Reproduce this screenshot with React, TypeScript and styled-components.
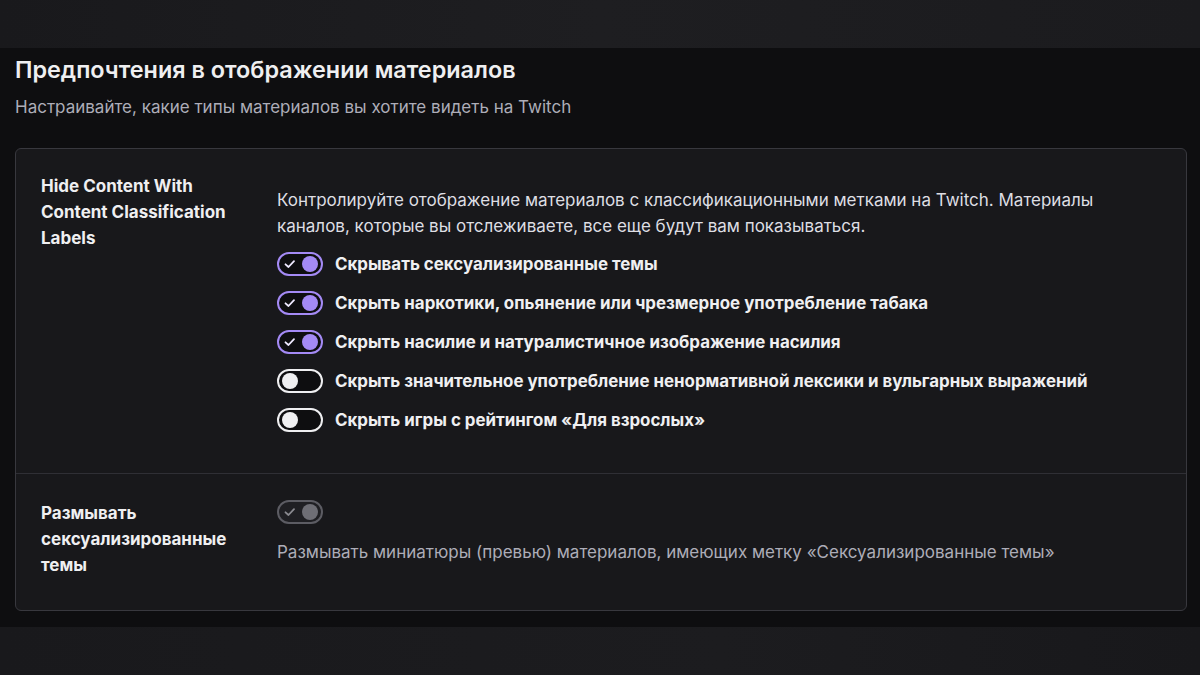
import React from "react";
import styled, { createGlobalStyle, css } from "styled-components";

const Global = createGlobalStyle`
  html, body { margin: 0; padding: 0; background: #0e0e10; }
  body { font-family: Inter, "Noto Sans", "Liberation Sans", sans-serif; color: #efeff1; }
  * { box-sizing: border-box; }
`;

const Page = styled.div`
  width: 1200px;
  height: 675px;
  display: flex;
  flex-direction: column;
  overflow: hidden;
  background: #0e0e10;
`;

const TopStrip = styled.div`
  height: 48px;
  flex: none;
  background: linear-gradient(90deg, #19191c 0%, #1e1e21 50%, #1b1b1e 100%);
`;

const BottomStrip = styled.div`
  flex: 1;
  background: linear-gradient(90deg, #19191c 0%, #1c1c1f 60%, #18181b 100%);
`;

const Main = styled.main`
  height: 579px;
  flex: none;
  padding: 7px 13px 0 15px;
  display: flex;
  flex-direction: column;
`;

const Title = styled.h2`
  margin: 0;
  font-size: 23.4px;
  line-height: 30px;
  font-weight: 600;
  color: #efeff1;
`;

const Subtitle = styled.p`
  margin: 10px 0 0;
  font-size: 17px;
  line-height: 24px;
  color: #adadb8;
`;

const Card = styled.section`
  margin-top: 29px;
  background: #18181b;
  border: 1px solid #38383e;
  border-radius: 6px;
`;

const Row = styled.div<{ $last?: boolean }>`
  display: grid;
  grid-template-columns: 236px 1fr;
  padding: ${(p) => (p.$last ? "26px 25px 32px" : "24px 25px 41px")};
  ${(p) =>
    !p.$last &&
    css`
      border-bottom: 1px solid #2f2f35;
    `}
`;

const Label = styled.div`
  font-size: 17px;
  line-height: 26px;
  font-weight: 700;
  color: #efeff1;
  max-width: 205px;
`;

const Control = styled.div<{ $offset?: number }>`
  padding-top: ${(p) => p.$offset ?? 0}px;
  display: flex;
  flex-direction: column;
  max-width: 850px;
`;

const Description = styled.p<{ $dim?: boolean }>`
  margin: 0;
  font-size: 17px;
  line-height: 26px;
  color: ${(p) => (p.$dim ? "#adadb8" : "#dedee3")};
`;

const DimDescription = styled(Description)`
  margin-top: 15px;
`;

const ToggleList = styled.div`
  margin-top: 13px;
  display: flex;
  flex-direction: column;
  gap: 15px;
`;

const ToggleRow = styled.label`
  display: flex;
  align-items: center;
  gap: 12px;
  height: 24px;
`;

const ToggleText = styled.span`
  font-size: 16.9px;
  font-weight: 700;
  color: #efeff1;
  white-space: nowrap;
`;

type TState = "on" | "off" | "disabled";

const Track = styled.span<{ $state: TState }>`
  position: relative;
  flex: none;
  width: 46px;
  height: 24px;
  border-radius: 12px;
  border: 2px solid
    ${(p) =>
      p.$state === "on" ? "#a48af5" : p.$state === "off" ? "#efeff1" : "#5c5c63"};
  background: ${(p) => (p.$state === "disabled" ? "#1f1f23" : "#0e0e10")};
  display: flex;
  align-items: center;
  padding: 0 3px;
  justify-content: ${(p) => (p.$state === "off" ? "flex-start" : "space-between")};
`;

const Knob = styled.span<{ $state: TState }>`
  width: 16px;
  height: 16px;
  border-radius: 50%;
  background: ${(p) =>
    p.$state === "on" ? "#a48af5" : p.$state === "off" ? "#efeff1" : "#6e6e75"};
`;

const CheckIcon = ({ color }: { color: string }) => (
  <svg width="16" height="16" viewBox="0 0 16 16" fill="none">
    <path d="M3.5 8.3 L6.5 11 L12 5.2" stroke={color} strokeWidth="1.8" strokeLinecap="round" strokeLinejoin="round" />
  </svg>
);

const Toggle = ({ state }: { state: TState }) => (
  <Track $state={state}>
    {state !== "off" && <CheckIcon color={state === "on" ? "#efeaff" : "#8a8a90"} />}
    <Knob $state={state} />
  </Track>
);

const items: { text: string; on: boolean }[] = [
  { text: "Скрывать сексуализированные темы", on: true },
  { text: "Скрыть наркотики, опьянение или чрезмерное употребление табака", on: true },
  { text: "Скрыть насилие и натуралистичное изображение насилия", on: true },
  { text: "Скрыть значительное употребление ненормативной лексики и вульгарных выражений", on: false },
  { text: "Скрыть игры с рейтингом «Для взрослых»", on: false },
];

export default function App() {
  return (
    <>
      <Global />
      <Page>
        <TopStrip />
        <Main>
          <Title>Предпочтения в отображении материалов</Title>
          <Subtitle>Настраивайте, какие типы материалов вы хотите видеть на Twitch</Subtitle>
          <Card>
            <Row>
              <Label>Hide Content With Content Classification Labels</Label>
              <Control $offset={14}>
                <Description>
                  Контролируйте отображение материалов с классификационными метками на Twitch. Материалы
                  каналов, которые вы отслеживаете, все еще будут вам показываться.
                </Description>
                <ToggleList>
                  {items.map((it) => (
                    <ToggleRow key={it.text}>
                      <Toggle state={it.on ? "on" : "off"} />
                      <ToggleText>{it.text}</ToggleText>
                    </ToggleRow>
                  ))}
                </ToggleList>
              </Control>
            </Row>
            <Row $last>
              <Label>Размывать сексуализированные темы</Label>
              <Control>
                <ToggleRow>
                  <Toggle state="disabled" />
                </ToggleRow>
                <DimDescription $dim>
                  Размывать миниатюры (превью) материалов, имеющих метку «Сексуализированные темы»
                </DimDescription>
              </Control>
            </Row>
          </Card>
        </Main>
        <BottomStrip />
      </Page>
    </>
  );
}
